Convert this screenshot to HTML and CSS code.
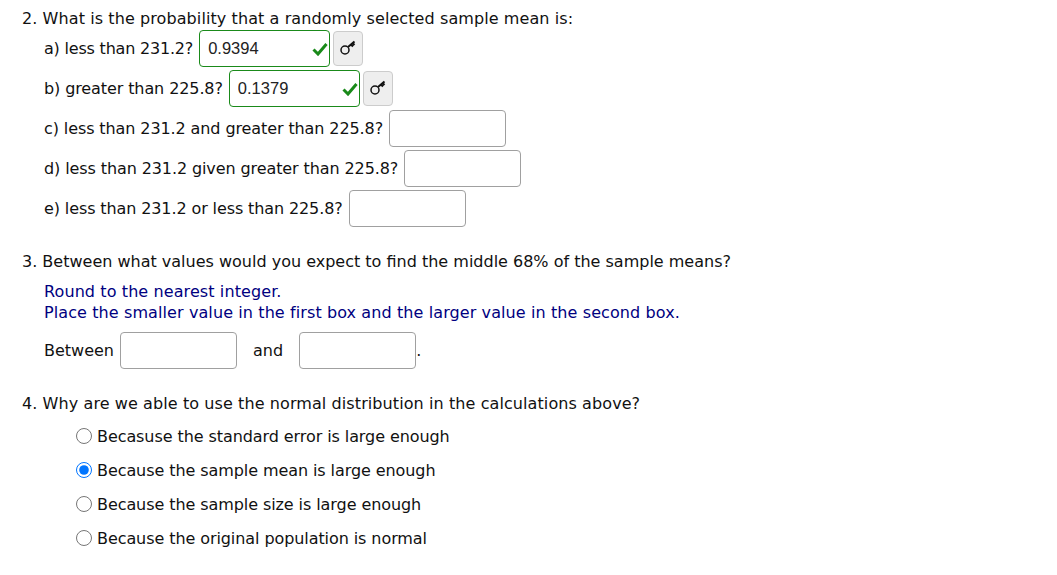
FILE: index.html
```html
<!DOCTYPE html>
<html lang="en">
<head>
    <meta charset="UTF-8">
    <meta name="viewport" content="width=device-width, initial-scale=1.0">
    <title>Sample means</title>
    <link rel="stylesheet" href="styles.css">
</head>
<body>
    <div class="question q2">
        <p class="stem">2. What is the probability that a randomly selected sample mean is:</p>
        <div class="part first">
            <span>a) less than 231.2?</span>
            <span class="answer">
                <input type="text" class="correct" value="0.9394" readonly>
                <svg class="check" viewBox="0 0 16 14"><path d="M1.5 7.5 L6 12 L14.5 2" fill="none" stroke="#1a8a1a" stroke-width="3"/></svg>
            </span>
            <button class="key-btn" type="button">
                <svg viewBox="0 0 18 18"><circle cx="6" cy="10" r="4" fill="none" stroke="#111" stroke-width="1.5"/><path d="M9 7 L15.5 1.5 M12 4.5 L14 6.5 M13.5 3 L15.5 5" fill="none" stroke="#111" stroke-width="2"/></svg>
            </button>
        </div>
        <div class="part">
            <span>b) greater than 225.8?</span>
            <span class="answer">
                <input type="text" class="correct" value="0.1379" readonly>
                <svg class="check" viewBox="0 0 16 14"><path d="M1.5 7.5 L6 12 L14.5 2" fill="none" stroke="#1a8a1a" stroke-width="3"/></svg>
            </span>
            <button class="key-btn" type="button">
                <svg viewBox="0 0 18 18"><circle cx="6" cy="10" r="4" fill="none" stroke="#111" stroke-width="1.5"/><path d="M9 7 L15.5 1.5 M12 4.5 L14 6.5 M13.5 3 L15.5 5" fill="none" stroke="#111" stroke-width="2"/></svg>
            </button>
        </div>
        <div class="part">
            <span>c) less than 231.2 and greater than 225.8?</span>
            <input type="text" class="blank">
        </div>
        <div class="part">
            <span>d) less than 231.2 given greater than 225.8?</span>
            <input type="text" class="blank">
        </div>
        <div class="part tight">
            <span>e) less than 231.2 or less than 225.8?</span>
            <input type="text" class="blank">
        </div>
    </div>

    <div class="question q3">
        <p class="stem">3. Between what values would you expect to find the middle 68% of the sample means?</p>
        <div class="hint">
            <p>Round to the nearest integer.</p>
            <p>Place the smaller value in the first box and the larger value in the second box.</p>
        </div>
        <div class="between">
            <span>Between</span>
            <input type="text" class="blank">
            <span class="and">and</span>
            <input type="text" class="blank">
            <span class="dot">.</span>
        </div>
    </div>

    <div class="question q4">
        <p class="stem">4. Why are we able to use the normal distribution in the calculations above?</p>
        <label class="choice"><input type="radio" name="why"><span>Becasuse the standard error is large enough</span></label>
        <label class="choice"><input type="radio" name="why" checked><span>Because the sample mean is large enough</span></label>
        <label class="choice"><input type="radio" name="why"><span>Because the sample size is large enough</span></label>
        <label class="choice"><input type="radio" name="why"><span>Because the original population is normal</span></label>
    </div>
</body>
</html>
```

FILE: styles.css
```css
body {
    font-family: "DejaVu Sans", sans-serif;
    font-size: 16px;
    color: #111;
    background: #fff;
    margin: 0;
    padding: 10px 0 0 22px;
}

p {
    margin: 0;
}

.stem {
    line-height: 18px;
}

.q2 .stem,
.q4 .stem {
    letter-spacing: 0.09px;
}

.part {
    display: flex;
    align-items: center;
    gap: 6px;
    height: 37px;
    margin-top: 3px;
    padding-left: 22px;
    letter-spacing: -0.1px;
}

.part.first {
    margin-top: 2px;
    letter-spacing: -0.2px;
}

.part.tight {
    letter-spacing: -0.11px;
}

input[type="text"] {
    box-sizing: border-box;
    height: 37px;
    border: 1px solid #a0a0a0;
    border-radius: 4px;
    padding: 0 8px;
    background: #fff;
    font-family: "Liberation Sans", sans-serif;
    font-size: 16.5px;
    letter-spacing: 0;
    color: #222;
    outline: none;
}

.blank {
    width: 117px;
}

.correct {
    width: 131px;
}

input.correct {
    border-color: #1a8a1a;
}

.answer {
    position: relative;
    display: flex;
}

.check {
    position: absolute;
    right: 2px;
    top: 12px;
    width: 16px;
    height: 14px;
}

.key-btn {
    display: flex;
    align-items: center;
    justify-content: center;
    width: 30px;
    height: 35px;
    padding: 0;
    margin-left: -3px;
    border: 1px solid #ccc;
    border-radius: 4px;
    background: #eee;
}

.key-btn svg {
    width: 18px;
    height: 18px;
}

.q3 {
    margin-top: 26px;
}

.hint {
    margin-top: 10px;
    padding-left: 22px;
    color: #000080;
    line-height: 21px;
    letter-spacing: 0.1px;
}

.between {
    display: flex;
    align-items: center;
    gap: 6px;
    height: 37px;
    margin-top: 9px;
    padding-left: 22px;
}

.and {
    margin: 0 10px 0 10px;
}

.dot {
    margin-left: -6px;
}

.q4 {
    margin-top: 26px;
}

.choice {
    display: flex;
    align-items: center;
    height: 34px;
    padding-left: 54px;
    letter-spacing: -0.08px;
}

.q4 .stem {
    margin-bottom: 6px;
}

.choice input {
    width: 16px;
    height: 16px;
    margin: 0 5px 0 0;
}
```
